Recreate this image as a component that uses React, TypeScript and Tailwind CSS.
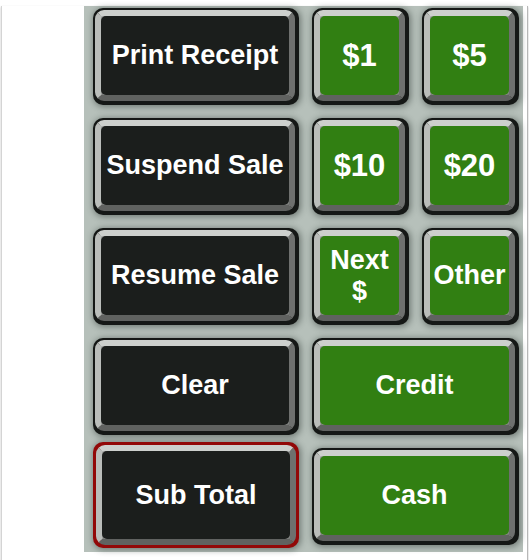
type Tone = 'dark' | 'green';

type KeyProps = {
  label: string[];
  tone: Tone;
  big?: boolean;
  span?: boolean;
  focus?: boolean;
};

function Key({ label, tone, big, span, focus }: KeyProps) {
  const face = tone === 'green' ? 'bg-[#317f12]' : 'bg-[#1b1e1c]';

  return (
    <div
      className={`rounded-[10px] shadow-[1px_1px_6px_1px_rgba(30,40,35,0.45)] ${
        focus ? 'bg-[#920808] -mt-[6px] -mb-[3px] p-[3px]' : 'bg-[#151816] pt-[2px] pl-[2px] pr-[4px] pb-[4px]'
      } ${span ? 'col-span-2' : ''}`}
    >
      {/* bevel rim */}
      <div className="h-full rounded-[9px] border-[6px] border-t-[#cdd0cd] border-l-[#babdba] border-r-[#6e706e] border-b-[#606260] bg-[#8d8f8d]">
        {/* Face */}
        <div
          className={`h-full rounded-[5px] ${face} flex flex-col items-center justify-center text-center text-white font-bold font-['Liberation_Sans',Arial,sans-serif] ${
            big ? 'text-[31px] leading-[34px]' : 'text-[27px] leading-[31px]'
          }`}
        >
          {label.map((line) => (
            <span key={line}>{line}</span>
          ))}
        </div>
      </div>
    </div>
  );
}

export default function App() {
  return (
    <div className="w-[529px] h-[560px] bg-white">
      <div className="ml-[1px] w-[527px] h-[556px] border-l border-r border-b border-l-[#d4d4d4] border-r-[#b8b8b8] border-b-[#8e8e8e] shadow-[0_1px_2px_rgba(0,0,0,0.25)]">
        <div className="ml-[82px] mt-[6px] w-[439px] h-[546px] bg-[#b6c0ba] pl-[9px] pt-[2px]">
          <div className="grid grid-cols-[206px_97px_97px] auto-rows-[97px] gap-[13px]">
            <Key label={['Print Receipt']} tone="dark" />
            <Key label={['$1']} tone="green" big />
            <Key label={['$5']} tone="green" big />

            <Key label={['Suspend Sale']} tone="dark" />
            <Key label={['$10']} tone="green" big />
            <Key label={['$20']} tone="green" big />

            <Key label={['Resume Sale']} tone="dark" />
            <Key label={['Next', '$']} tone="green" />
            <Key label={['Other']} tone="green" />

            <Key label={['Clear']} tone="dark" />
            <Key label={['Credit']} tone="green" span />

            <Key label={['Sub Total']} tone="dark" focus />
            <Key label={['Cash']} tone="green" span />
          </div>
        </div>
      </div>
    </div>
  );
}
